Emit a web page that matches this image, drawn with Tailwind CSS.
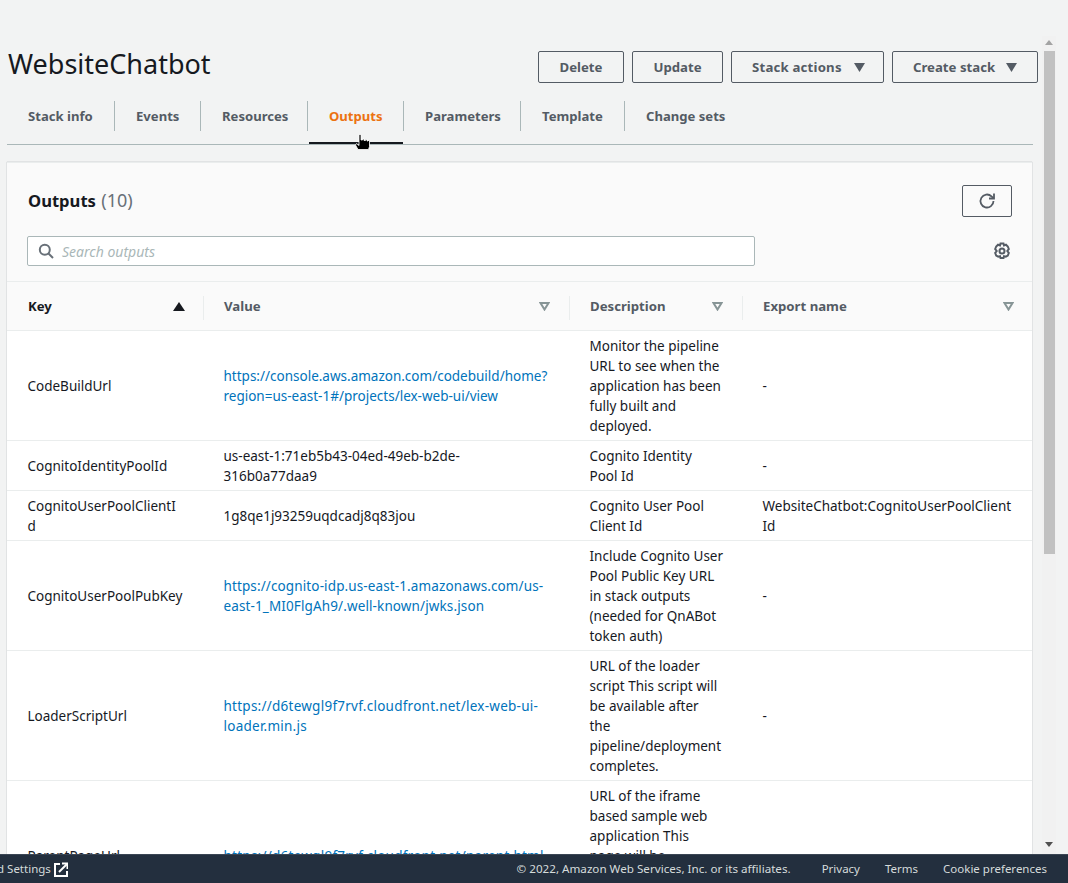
<!DOCTYPE html>
<html lang="en">
<head>
    <meta charset="UTF-8">
    <title>WebsiteChatbot</title>
    <script src="https://cdn.jsdelivr.net/npm/@tailwindcss/browser@4"></script>
</head>
<body class="h-screen overflow-hidden flex flex-col bg-[#f2f3f3] text-[14px] leading-[20px] text-[#16191f] font-['Noto_Sans',sans-serif]">
    <div class="flex-1 min-h-0 flex overflow-hidden">
        <!-- Main content -->
        <div class="w-[1033px] pl-[7px] pt-[51px] shrink-0">
            <!-- Title and actions -->
            <div class="flex justify-between h-[32px]">
                <h1 class="text-[27px] leading-[26px] ml-[1px]">WebsiteChatbot</h1>
                <div class="flex gap-[8px] font-bold text-[#545b64] text-[13.2px] mr-[-5px]">
                    <button class="w-[86px] h-[32px] border border-[#545b64] rounded-[2px]">Delete</button>
                    <button class="w-[91px] h-[32px] border border-[#545b64] rounded-[2px]">Update</button>
                    <button class="w-[153px] h-[32px] border border-[#545b64] rounded-[2px] flex items-center pl-[20px] gap-[12px]"><span class="tracking-[0.2px]">Stack actions</span>
                        <svg width="11" height="9" viewBox="0 0 11 9"><path d="M0 0h11L5.500 9z" fill="#545b64"/></svg>
                    </button>
                    <button class="w-[146px] h-[32px] border border-[#545b64] rounded-[2px] flex items-center pl-[20px] gap-[11px]">Create stack
                        <svg width="11" height="9" viewBox="0 0 11 9"><path d="M0 0h11L5.500 9z" fill="#545b64"/></svg>
                    </button>
                </div>
            </div>

            <!-- Tabs -->
            <div class="relative flex mt-[18px] h-[44px] border-b border-[#aab7b8] font-bold text-[13.100px] text-[#545b64]">
                <a class="w-[108px] h-[30px] flex items-center pl-[21px] border-r border-[#aab7b8]">Stack info</a>
                <a class="w-[86px] h-[30px] flex items-center pl-[21px] border-r border-[#aab7b8]">Events</a>
                <a class="w-[107px] h-[30px] flex items-center pl-[21px] border-r border-[#aab7b8]">Resources</a>
                <a class="relative w-[96px] h-[30px] flex items-center pl-[21px] border-r border-[#aab7b8] text-[#ec7211]">Outputs
                    <span class="absolute left-[1px] right-[0px] top-[41px] h-[2px] bg-[#16191f]"></span>
                    <svg class="absolute left-[47px] top-[33px]" width="16" height="17" viewBox="0 0 16 17"><path d="M4 .5h2V6h1.500V5H9v1.500h1.500V5.500H12V7h1V6.500h1.500v6l-1 3H3L.5 11l1-1.500 2.500 2z" fill="#000" stroke="#fff" stroke-width="0.8"/></svg>
                </a>
                <a class="w-[117px] h-[30px] flex items-center pl-[21px] border-r border-[#aab7b8]">Parameters</a>
                <a class="w-[104px] h-[30px] flex items-center pl-[21px] border-r border-[#aab7b8]">Template</a>
                <a class="h-[30px] flex items-center pl-[21px]">Change sets</a>
            </div>

            <!-- Outputs card -->
            <div class="mt-[17px] w-[1025px] bg-[#fafafa] border-t border-[#eaeded] shadow-[0_0_1px_rgba(0,28,36,0.4)]">
                <div class="h-[119px] px-[20px] border-b border-[#eaeded]">
                    <div class="flex justify-between pt-[22px] h-[73px]">
                        <h2 class="text-[16.600px] leading-[30px] font-bold ml-[1px]">Outputs <span class="font-normal text-[18px] text-[#687078] ml-[1px]">(10)</span></h2>
                        <button class="w-[50px] h-[32px] border border-[#545b64] rounded-[2px] flex items-center justify-center">
                            <svg width="18" height="18" viewBox="0 0 18 18" fill="none" stroke="#545b64" stroke-width="1.800"><path d="M15.500 9a6.500 6.500 0 1 1-2-4.700L15.500 6.200"/><path d="M16 1.500v5h-5"/></svg>
                        </button>
                    </div>
                    <div class="flex justify-between items-center">
                        <div class="w-[728px] h-[30px] bg-white border border-[#aab7b8] rounded-[2px] flex items-center pl-[10px] gap-[8px]">
                            <svg width="16" height="16" viewBox="0 0 16 16" fill="none" stroke="#687078" stroke-width="2"><circle cx="6.800" cy="6.800" r="5"/><path d="M10.500 10.500L15 15"/></svg>
                            <span class="italic text-[14px] text-[#aab7b8] pt-[1px]">Search outputs</span>
                        </div>
                        <svg class="mr-[1px]" width="18" height="18" viewBox="0 0 18 18" fill="none" stroke="#545b64" stroke-width="2"><circle cx="9" cy="9" r="2.500"/><path d="M7.500 1.500h3l.5 2 2-.8 1.800 1.800 1 2.500-1.500 2 1.500 2-1 2.500-2 1.200-1.800-.5-.5 1.800h-3l-.5-1.800-1.800.5-2-1.200-1-2.500 1.500-2-1.500-2 1-2.500 1.800-1.800 2 .8z"/></svg>
                    </div>
                </div>

                <table class="w-[1025px] table-fixed border-collapse bg-white">
                    <colgroup>
                        <col class="w-[196px]"><col class="w-[366px]"><col class="w-[173px]"><col class="w-[290px]">
                    </colgroup>
                    <thead class="bg-[#fafafa] text-[13.200px] text-[#545b64]">
                        <tr class="h-[48px] border-b border-[#eaeded] [&_th]:pt-[1px]">
                            <th class="relative text-left pl-[21px] pr-[18px]">
                                <div class="flex justify-between items-center text-[#16191f]">Key
                                    <svg width="12" height="9" viewBox="0 0 12 9"><path d="M6 0l6 9H0z" fill="#16191f"/></svg>
                                </div>
                                <span class="absolute right-[-1px] top-[14px] h-[24px] w-[1px] bg-[#eaeded]"></span>
                            </th>
                            <th class="relative text-left pl-[21px] pr-[19px]">
                                <div class="flex justify-between items-center">Value
                                    <svg width="11" height="9" viewBox="0 0 11 9" fill="none" stroke="#879596" stroke-width="2"><path d="M1.500 1h8l-4 6.500z"/></svg>
                                </div>
                                <span class="absolute right-[-1px] top-[14px] h-[24px] w-[1px] bg-[#eaeded]"></span>
                            </th>
                            <th class="relative text-left pl-[21px] pr-[19px]">
                                <div class="flex justify-between items-center">Description
                                    <svg width="11" height="9" viewBox="0 0 11 9" fill="none" stroke="#879596" stroke-width="2"><path d="M1.500 1h8l-4 6.500z"/></svg>
                                </div>
                                <span class="absolute right-[-1px] top-[14px] h-[24px] w-[1px] bg-[#eaeded]"></span>
                            </th>
                            <th class="text-left pl-[21px] pr-[18px]">
                                <div class="flex justify-between items-center">Export name
                                    <svg width="11" height="9" viewBox="0 0 11 9" fill="none" stroke="#879596" stroke-width="2"><path d="M1.500 1h8l-4 6.500z"/></svg>
                                </div>
                            </th>
                        </tr>
                    </thead>
                    <tbody class="text-[13.500px] leading-[20px] [&_td]:pl-[20.500px] [&_td]:pr-[20px] [&_td]:pt-[5px] [&_td]:pb-[4px] [&_td]:break-words [&_tr]:border-b [&_tr]:border-[#eaeded] [&_a]:text-[#0073bb]">
                        <tr>
                            <td>CodeBuildUrl</td>
                            <td><a>https://console.aws.amazon.com/codebuild/home?region=us-east-1#/projects/lex-web-ui/view</a></td>
                            <td>Monitor the pipeline URL to see when the application has been fully built and deployed.</td>
                            <td>-</td>
                        </tr>
                        <tr>
                            <td>CognitoIdentityPoolId</td>
                            <td>us-east-1:71eb5b43-04ed-49eb-b2de-316b0a77daa9</td>
                            <td>Cognito Identity Pool Id</td>
                            <td>-</td>
                        </tr>
                        <tr>
                            <td>CognitoUserPoolClientId</td>
                            <td>1g8qe1j93259uqdcadj8q83jou</td>
                            <td>Cognito User Pool Client Id</td>
                            <td>WebsiteChatbot:CognitoUserPoolClientId</td>
                        </tr>
                        <tr>
                            <td>CognitoUserPoolPubKey</td>
                            <td><a class="tracking-[0.12px]">https://cognito-idp.us-east-1.amazonaws.com/us-east-1_MI0FlgAh9/.well-known/jwks.json</a></td>
                            <td><span class="whitespace-nowrap">Include Cognito User</span> <span class="whitespace-nowrap">Pool Public Key URL</span> in stack outputs (needed for QnABot token auth)</td>
                            <td>-</td>
                        </tr>
                        <tr>
                            <td>LoaderScriptUrl</td>
                            <td><a class="tracking-[0.25px]">https://d6tewgl9f7rvf.cloudfront.net/lex-web-ui-loader.min.js</a></td>
                            <td>URL of the loader script This script will be available after the pipeline/deployment completes.</td>
                            <td>-</td>
                        </tr>
                        <tr>
                            <td>ParentPageUrl</td>
                            <td><a class="tracking-[0.25px]">https://d6tewgl9f7rvf.cloudfront.net/parent.html</a></td>
                            <td>URL of the iframe based sample web application This page will be available after the pipeline/deployment completes.</td>
                            <td>-</td>
                        </tr>
                    </tbody>
                </table>
            </div>
        </div>

        <!-- Scrollbar -->
        <div class="w-[35px] shrink-0 flex">
            <div class="ml-[9px] w-[14px] mt-[36px] relative bg-[#f1f1f1]">
                <svg class="absolute left-[3px] top-[4px]" width="8" height="5" viewBox="0 0 8 5"><path d="M4 0l4 5H0z" fill="#a3a3a3"/></svg>
                <div class="absolute left-[2px] top-[15px] w-[11px] h-[503px] bg-[#c1c1c1]"></div>
                <svg class="absolute left-[3px] top-[806px]" width="8" height="5" viewBox="0 0 8 5"><path d="M0 0h8L4 5z" fill="#505050"/></svg>
            </div>
        </div>
    </div>

    <!-- Footer -->
    <footer class="h-[29px] shrink-0 bg-[#232f3e] border-t border-[#3b4654] text-[#d5dbdb] text-[11.500px] flex items-center justify-between pr-[21px] -mt-[1px] relative">
        <div class="flex items-center gap-[3px]">
            <span class="-ml-[3px]">d Settings</span>
            <svg width="14" height="15" viewBox="0 0 14 15" fill="none" stroke="#fff" stroke-width="2"><path d="M6 2H1v12h12V9"/><path d="M5 10L13 2"/><path d="M8 1.500h5.500V7"/></svg>
        </div>
        <div class="flex items-center gap-[25px]">
            <span class="mr-[6px] text-[11.650px]">© 2022, Amazon Web Services, Inc. or its affiliates.</span>
            <span>Privacy</span>
            <span>Terms</span>
            <span>Cookie preferences</span>
        </div>
    </footer>
</body>
</html>
